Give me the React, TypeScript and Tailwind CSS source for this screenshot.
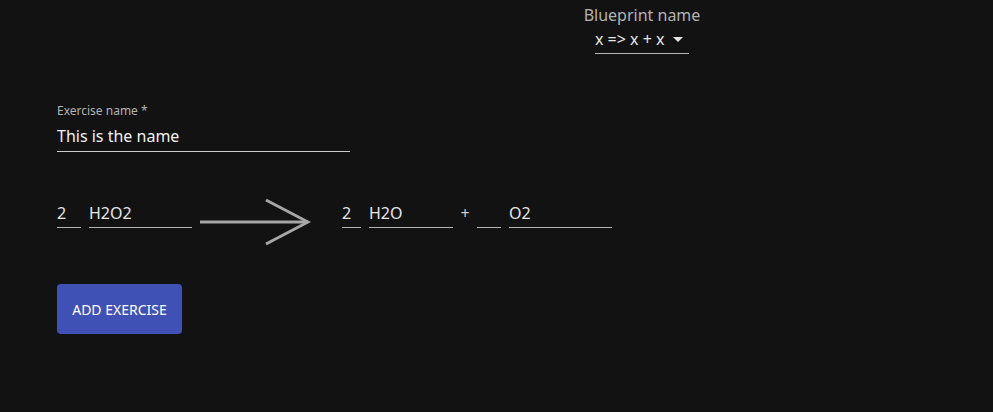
import React from "react";

function Field({ value, width, className = "" }: { value: string; width: string; className?: string }) {
  return (
    <div className={`flex flex-col ${width} ${className}`}>
      <div className="h-[24px] leading-[24px] text-[16px] text-[#e6e6e6] whitespace-nowrap">{value}</div>
      <div className="mt-[2px] h-px bg-[#b3b3b3]" />
    </div>
  );
}

export default function App() {
  return (
    <div
      className="min-h-[412px] w-full bg-[#121212] text-white"
      style={{ fontFamily: '"Noto Sans", "Open Sans", sans-serif' }}
    >
      <div className="flex">
        <div className="ml-[584px] mt-[3px] flex flex-col items-center w-[116px]">
          <div className="text-[16px] leading-[24px] text-[#b3b3b3] whitespace-nowrap">Blueprint name</div>
          <div className="mt-[0px] flex flex-col w-[94px]">
            <div className="flex items-center h-[24px] text-[16px] leading-[24px] text-[#e6e6e6]">
              <span className="whitespace-nowrap">x =&gt; x + x</span>
              <svg width="10" height="5" viewBox="0 0 10 5" className="ml-[8px]">
                <path d="M0 0 L10 0 L5 5 Z" fill="#e6e6e6" />
              </svg>
            </div>
            <div className="mt-[2px] h-px bg-[#b3b3b3]" />
          </div>
        </div>
      </div>

      <div className="ml-[57px] mt-[49px] w-[293px] flex flex-col">
        <div className="text-[12px] leading-[16px] text-[#b3b3b3]">Exercise name *</div>
        <div className="mt-[5px] h-[24px] leading-[24px] text-[16px] text-[#f0f0f0]">This is the name</div>
        <div className="mt-[3px] h-px bg-[#cccccc]" />
      </div>

      <div className="ml-[57px] mt-[41px] flex items-start">
        <div className="mt-[8px] flex items-start">
          <Field value="2" width="w-[24px]" />
          <Field value="H2O2" width="w-[103px]" className="ml-[8px]" />
        </div>
        <svg width="112" height="48" viewBox="0 0 112 48" className="ml-[7px] mt-[5px]">
          <path d="M1 24 L109 24" stroke="#a6a6a6" strokeWidth="3" fill="none" />
          <path d="M67 2 L109 24 L67 46" stroke="#a6a6a6" strokeWidth="3" fill="none" />
        </svg>
        <div className="ml-[31px] mt-[8px] flex items-start">
          <Field value="2" width="w-[19px]" />
          <Field value="H2O" width="w-[84px]" className="ml-[8px]" />
          <div className="w-[24px] h-[24px] leading-[24px] text-[16px] text-[#cccccc] text-center">+</div>
          <Field value="" width="w-[24px]" />
          <Field value="O2" width="w-[103px]" className="ml-[8px]" />
        </div>
      </div>

      <button className="ml-[57px] mt-[38px] w-[125px] h-[50px] rounded-[4px] bg-[#3f51b5] text-[14px] text-white uppercase">
        Add exercise
      </button>
    </div>
  );
}
